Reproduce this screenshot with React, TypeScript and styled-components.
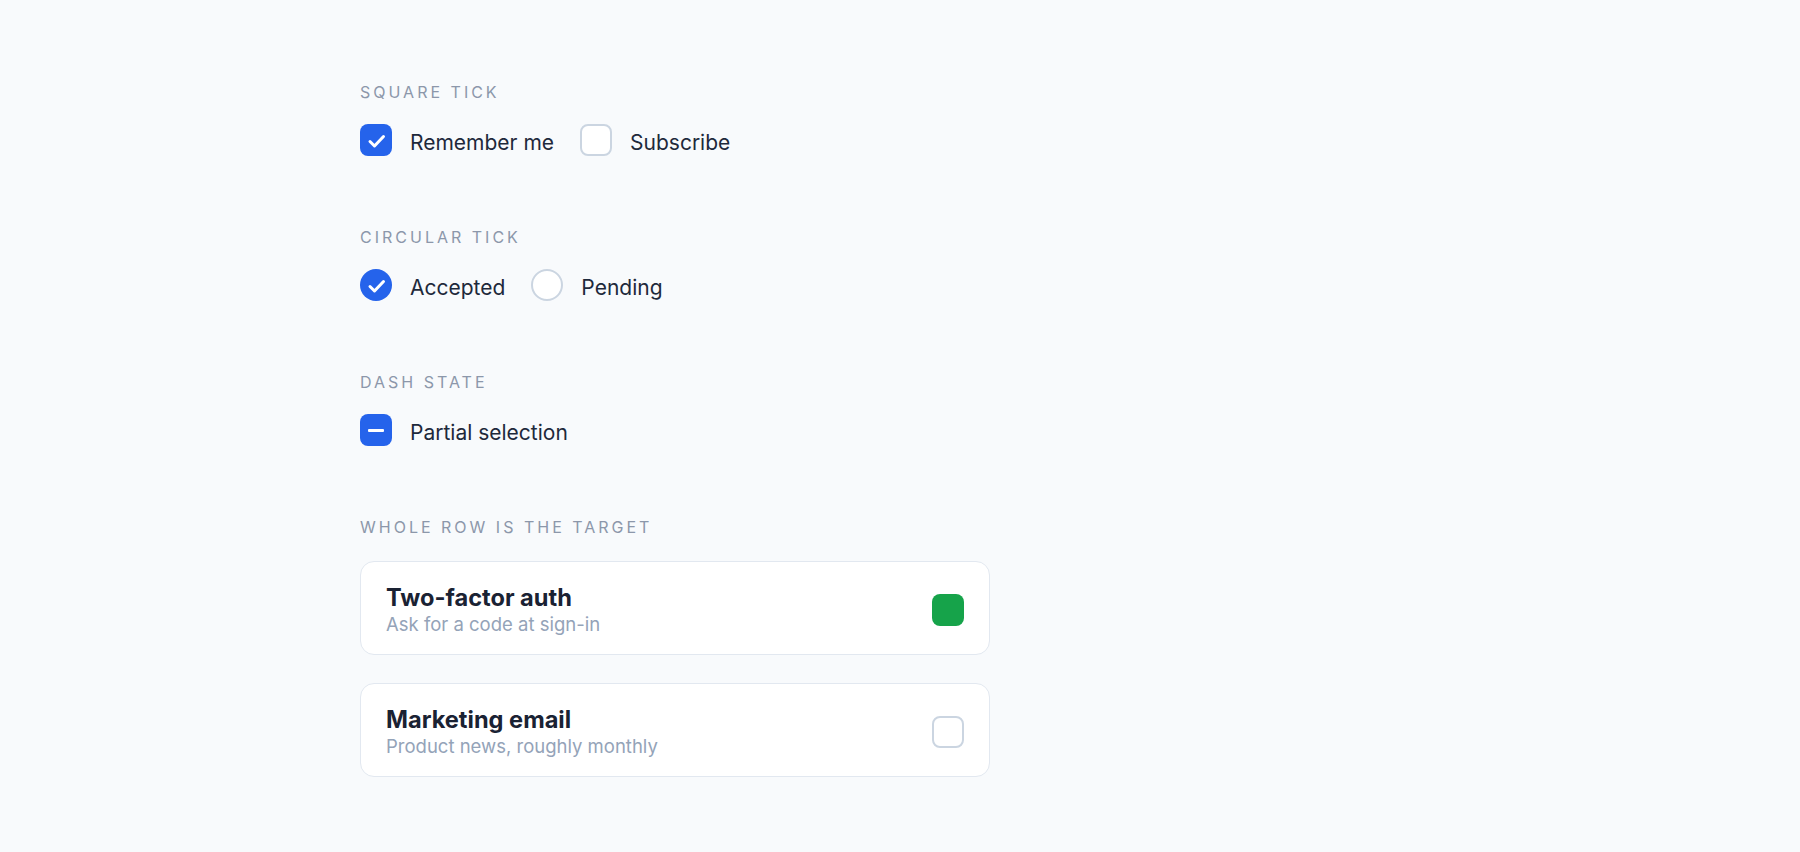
import React, { useState } from 'react';
import styled, { createGlobalStyle, css } from 'styled-components';

const GlobalStyle = createGlobalStyle`
  * { box-sizing: border-box; }
  body {
    margin: 0;
    background: #f8fafc;
    font-family: Inter, 'Noto Sans', 'Liberation Sans', sans-serif;
    color: #1e293b;
  }
`;

const Page = styled.main`
  max-width: 1080px;
  margin: 0 auto;
  padding: 83px 0 60px;
  display: flex;
  flex-direction: column;
  gap: 72px;
`;

const Section = styled.section`
  display: flex;
  flex-direction: column;
  gap: 23px;
`;

const Heading = styled.h2`
  margin: 0;
  font-size: 16px;
  line-height: 18px;
  font-weight: 400;
  letter-spacing: 3px;
  text-transform: uppercase;
  color: #8c97aa;
`;

const Row = styled.div`
  display: flex;
  align-items: center;
  gap: 26px;
`;

const Option = styled.label`
  display: inline-flex;
  align-items: center;
  gap: 18px;
  cursor: pointer;
  user-select: none;
`;

// text sits a touch below the box centre
const OptionText = styled.span`
  font-size: 21px;
  line-height: 26px;
  padding-top: 6px;
  color: #1e293b;
`;

type Shape = 'square' | 'circle';

const Box = styled.span<{ $shape: Shape; $on: boolean; $tone?: string }>`
  flex: none;
  width: 32px;
  height: 32px;
  display: flex;
  align-items: center;
  justify-content: center;
  border-radius: ${(p) => (p.$shape === 'circle' ? '50%' : '8px')};
  ${(p) =>
    p.$on
      ? css`
          background: ${p.$tone || '#2563eb'};
        `
      : css`
          background: #fff;
          border: 2px solid #cbd5e1;
        `}
`;

const Dash = styled.span`
  width: 16px;
  height: 3px;
  border-radius: 1px;
  background: #fff;
`;

const Tick = () => (
  <svg width="32" height="32" viewBox="0 0 32 32" fill="none">
    <polyline
      points="10,17.5 14.5,22 23.5,12.5"
      stroke="#fff"
      strokeWidth="3"
      strokeLinecap="round"
      strokeLinejoin="round"
    />
  </svg>
);

const CardList = styled.div`
  display: flex;
  flex-direction: column;
  gap: 28px;
  width: 630px;
  margin-top: 2px;
`;

const Card = styled.label`
  display: flex;
  align-items: center;
  justify-content: space-between;
  padding: 21px 25px 17px;
  background: #fff;
  border: 1px solid #e2e8f0;
  border-radius: 14px;
  cursor: pointer;
  user-select: none;
`;

const CardText = styled.div`
  display: flex;
  flex-direction: column;
`;

const CardTitle = styled.span`
  font-size: 23.6px;
  line-height: 29px;
  font-weight: 700;
  color: #1a2233;
`;

const CardHint = styled.span`
  font-size: 18.5px;
  line-height: 25px;
  color: #94a3b8;
`;

const App: React.FC = () => {
  const [remember, setRemember] = useState(true);
  const [subscribe, setSubscribe] = useState(false);
  const [accepted, setAccepted] = useState(true);
  const [pending, setPending] = useState(false);
  const [twoFactor, setTwoFactor] = useState(true);
  const [marketing, setMarketing] = useState(false);

  return (
    <>
      <GlobalStyle />
      <Page>
        <Section>
          <Heading>Square tick</Heading>
          <Row>
            <Option onClick={() => setRemember(!remember)}>
              <Box $shape="square" $on={remember}>{remember && <Tick />}</Box>
              <OptionText>Remember me</OptionText>
            </Option>
            <Option onClick={() => setSubscribe(!subscribe)}>
              <Box $shape="square" $on={subscribe}>{subscribe && <Tick />}</Box>
              <OptionText>Subscribe</OptionText>
            </Option>
          </Row>
        </Section>

        <Section>
          <Heading>Circular tick</Heading>
          <Row>
            <Option onClick={() => setAccepted(!accepted)}>
              <Box $shape="circle" $on={accepted}>{accepted && <Tick />}</Box>
              <OptionText>Accepted</OptionText>
            </Option>
            <Option onClick={() => setPending(!pending)}>
              <Box $shape="circle" $on={pending}>{pending && <Tick />}</Box>
              <OptionText>Pending</OptionText>
            </Option>
          </Row>
        </Section>

        <Section>
          <Heading>Dash state</Heading>
          <Row>
            <Option>
              <Box $shape="square" $on>
                <Dash />
              </Box>
              <OptionText>Partial selection</OptionText>
            </Option>
          </Row>
        </Section>

        <Section>
          <Heading>Whole row is the target</Heading>
          <CardList>
            <Card onClick={() => setTwoFactor(!twoFactor)}>
              <CardText>
                <CardTitle>Two-factor auth</CardTitle>
                <CardHint>Ask for a code at sign-in</CardHint>
              </CardText>
              <Box $shape="square" $on={twoFactor} $tone="#16a34a" />
            </Card>
            <Card onClick={() => setMarketing(!marketing)}>
              <CardText>
                <CardTitle>Marketing email</CardTitle>
                <CardHint>Product news, roughly monthly</CardHint>
              </CardText>
              <Box $shape="square" $on={marketing} $tone="#16a34a" />
            </Card>
          </CardList>
        </Section>
      </Page>
    </>
  );
};

export default App;
